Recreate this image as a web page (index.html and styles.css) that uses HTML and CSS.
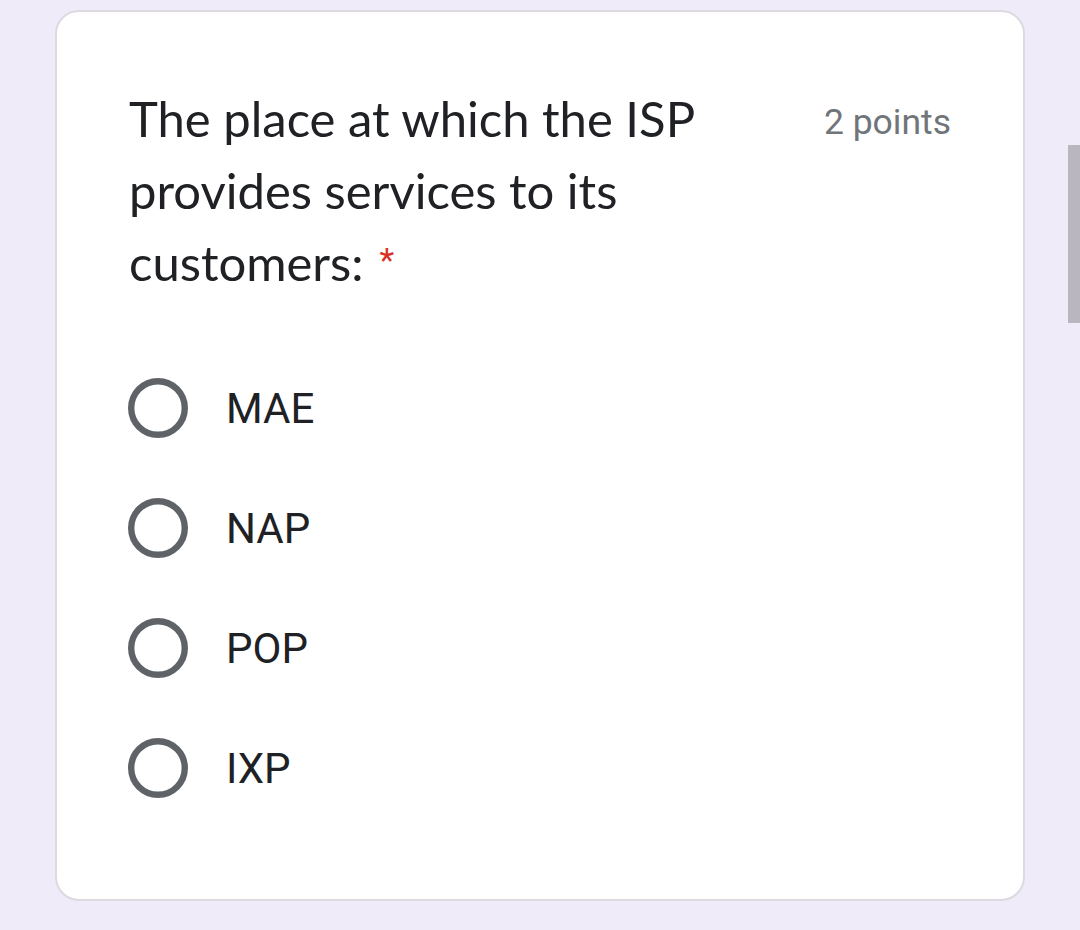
FILE: index.html
```html
<!DOCTYPE html>
<html>
<head>
<meta charset="utf-8">
<link rel="stylesheet" href="styles.css">
</head>
<body>
<div class="page">
  <div class="card">
    <div class="header">
      <div class="title">The place at which the ISP provides services to its customers:<span class="req">*</span></div>
      <div class="points">2 points</div>
    </div>
    <div class="options">
      <div class="option"><svg class="radio" viewBox="0 0 60 60"><circle cx="30" cy="30" r="26.8" fill="none" stroke="#5f6368" stroke-width="6.4"/></svg><span class="label">MAE</span></div>
      <div class="option"><svg class="radio" viewBox="0 0 60 60"><circle cx="30" cy="30" r="26.8" fill="none" stroke="#5f6368" stroke-width="6.4"/></svg><span class="label">NAP</span></div>
      <div class="option"><svg class="radio" viewBox="0 0 60 60"><circle cx="30" cy="30" r="26.8" fill="none" stroke="#5f6368" stroke-width="6.4"/></svg><span class="label">POP</span></div>
      <div class="option"><svg class="radio" viewBox="0 0 60 60"><circle cx="30" cy="30" r="26.8" fill="none" stroke="#5f6368" stroke-width="6.4"/></svg><span class="label">IXP</span></div>
    </div>
  </div>
  <div class="scrollbar"></div>
</div>
</body>
</html>
```

FILE: styles.css
```css
html, body {
  margin: 0;
  padding: 0;
  background: #efebf8;
}
.page {
  position: relative;
  width: 1080px;
  height: 930px;
  padding-top: 10px;
  box-sizing: border-box;
}
.card {
  margin-left: 55px;
  width: 970px;
  height: 891px;
  box-sizing: border-box;
  background: #ffffff;
  border: 2px solid #dcdae0;
  border-radius: 24px;
  padding: 70px 72px 0 72px;
}
.header {
  display: flex;
  justify-content: space-between;
  align-items: flex-start;
}
.title {
  width: 600px;
  font-family: Lato, sans-serif;
  font-size: 49px;
  line-height: 72px;
  color: #202124;
}
.req {
  display: inline-block;
  vertical-align: top;
  font-family: Roboto, sans-serif;
  font-size: 34px;
  line-height: 34px;
  margin-top: 17px;
  color: #d93025;
  margin-left: 16px;
}
.points {
  font-family: Roboto, sans-serif;
  font-size: 35.5px;
  line-height: 72px;
  color: #70757a;
  white-space: nowrap;
  margin-top: 4px;
}
.options {
  margin-top: 50px;
  display: flex;
  flex-direction: column;
}
.option {
  display: flex;
  align-items: center;
  height: 120px;
}
.radio {
  width: 60px;
  height: 60px;
  margin-left: -1px;
  flex: none;
}
.label {
  margin-left: 38px;
  font-family: Roboto, sans-serif;
  font-size: 42px;
  color: #202124;
}
.scrollbar {
  position: absolute;
  left: 1068px;
  top: 145px;
  width: 12px;
  height: 178px;
  background: #b9b6bf;
}
```
